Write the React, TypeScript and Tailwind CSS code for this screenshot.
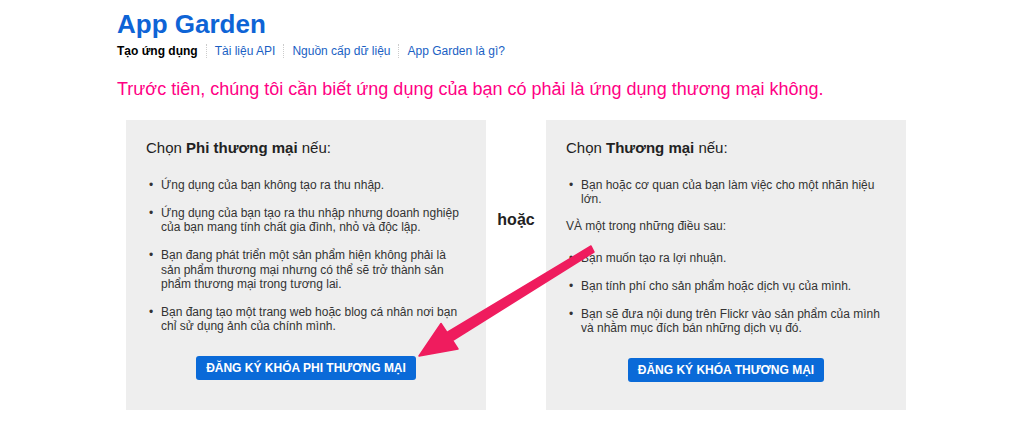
import React from 'react'

const NAV = ['Tạo ứng dụng', 'Tài liệu API', 'Nguồn cấp dữ liệu', 'App Garden là gì?']

const NONCOMMERCIAL = [
  'Ứng dụng của bạn không tạo ra thu nhập.',
  'Ứng dụng của bạn tạo ra thu nhập nhưng doanh nghiệp của bạn mang tính chất gia đình, nhỏ và độc lập.',
  'Bạn đang phát triển một sản phẩm hiện không phải là sản phẩm thương mại nhưng có thể sẽ trở thành sản phẩm thương mại trong tương lai.',
  'Bạn đang tạo một trang web hoặc blog cá nhân nơi bạn chỉ sử dụng ảnh của chính mình.',
]

const COMMERCIAL_ANY = [
  'Bạn muốn tạo ra lợi nhuận.',
  'Bạn tính phí cho sản phẩm hoặc dịch vụ của mình.',
  'Bạn sẽ đưa nội dung trên Flickr vào sản phẩm của mình và nhằm mục đích bán những dịch vụ đó.',
]

function Bullets({ items }: { items: string[] }) {
  return (
    <ul className="flex flex-col gap-[13.5px] text-[12px] leading-[14.4px] text-[#333]">
      {items.map(t => (
        <li key={t} className="flex">
          <span className="w-[15px] shrink-0 pl-[3px]">•</span>
          <span>{t}</span>
        </li>
      ))}
    </ul>
  )
}

function Button({ label }: { label: string }) {
  return (
    <div className="flex justify-center">
      <button className="h-6 px-[10px] rounded-[3px] bg-[#0a6ad8] text-white text-[12px] font-bold">
        {label}
      </button>
    </div>
  )
}

export default function App() {
  return (
    <div className="relative w-[1024px] h-[432px] bg-white overflow-hidden pl-[117px] pt-[9px]"
         style={{ fontFamily: '"Liberation Sans", Arial, sans-serif' }}>

      <h1 className="text-[26px] leading-[30px] font-bold text-[#0e64d6]">App Garden</h1>

      <nav className="flex items-center mt-[4px] text-[12px] leading-4">
        {NAV.map((n, i) => (
          <div key={n} className="flex items-center">
            {i > 0 && <span className="h-[14px] border-l border-dotted border-[#ccc] mx-[8px]" />}
            <span className={i === 0 ? 'font-bold text-black' : 'text-[#1a5fc4]'}>{n}</span>
          </div>
        ))}
      </nav>

      <p className="mt-[18px] text-[18px] leading-6 text-[#ff0084]">
        Trước tiên, chúng tôi cần biết ứng dụng của bạn có phải là ứng dụng thương mại không.
      </p>

      <div className="flex mt-[19px] ml-[9px]">
        {/* Non-commercial */}
        <div className="w-[360px] h-[290px] bg-[#eeeeee] px-5 pt-[19px]">
          <h3 className="text-[15px] leading-[18px] text-[#222] mb-[21px]">
            Chọn <b>Phi thương mại</b> nếu:
          </h3>
          <Bullets items={NONCOMMERCIAL} />
          <div className="mt-[22px]">
            <Button label="ĐĂNG KÝ KHÓA PHI THƯƠNG MẠI" />
          </div>
        </div>

        <div className="w-[60px] pt-[90px] text-center text-[16px] leading-5 font-bold text-[#222]">hoặc</div>

        {/* Commercial */}
        <div className="w-[360px] h-[290px] bg-[#eeeeee] px-5 pt-[19px]">
          <h3 className="text-[15px] leading-[18px] text-[#222] mb-[21px]">
            Chọn <b>Thương mại</b> nếu:
          </h3>
          <Bullets items={['Bạn hoặc cơ quan của bạn làm việc cho một nhãn hiệu lớn.']} />
          <p className="mt-[12px] mb-[18px] text-[12px] leading-[14.4px] text-[#333]">VÀ một trong những điều sau:</p>
          <Bullets items={COMMERCIAL_ANY} />
          <div className="mt-[22px]">
            <Button label="ĐĂNG KÝ KHÓA THƯƠNG MẠI" />
          </div>
        </div>
      </div>

      {/* annotation arrow */}
      <svg className="absolute left-0 top-0 pointer-events-none" width="1024" height="432">
        <polygon
          points="591,246 447,332.5 441,323.5 419,356 458,349 452.5,340.5 594,252"
          fill="#ef1c5e"
          stroke="#ef1c5e"
          strokeWidth="1.5"
          strokeLinejoin="round"
        />
      </svg>
    </div>
  )
}
